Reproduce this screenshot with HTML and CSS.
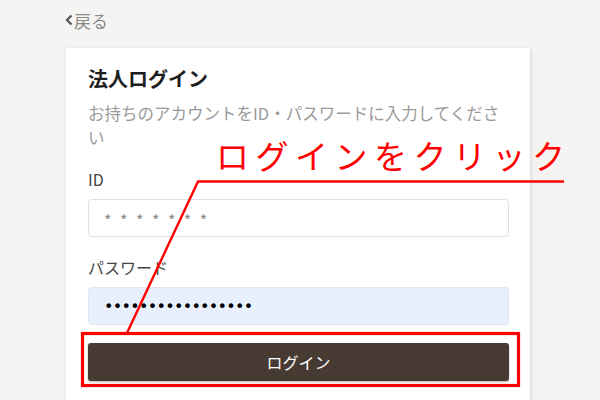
FILE: index.html
```html
<!DOCTYPE html>
<html lang="ja">
<head>
<meta charset="utf-8">
<link rel="stylesheet" href="styles.css">
</head>
<body>
<div class="page">
  <a class="back"><span class="chev"><svg width="8" height="12" viewBox="0 0 8 12"><path d="M6.5 1.5 L2 6 L6.5 10.5" fill="none" stroke="#555" stroke-width="2.2"/></svg></span>戻る</a>
  <div class="card">
    <h1 class="title">法人ログイン</h1>
    <p class="desc">お持ちのアカウントをID・パスワードに入力してください</p>
    <label class="label">ID</label>
    <div class="input"><span class="mask">*******</span></div>
    <label class="label">パスワード</label>
    <div class="input filled"><span class="dots">•••••••••••••••••</span></div>
    <button class="btn">ログイン</button>
  </div>
</div>
<div class="note">ログインをクリック</div>
<svg class="overlay" width="600" height="400" viewBox="0 0 600 400">
  <polyline points="564,181.5 198,181.5 127,333" fill="none" stroke="#f00" stroke-width="2.4"/>
  <rect x="82.5" y="333.5" width="436" height="52" fill="none" stroke="#f00" stroke-width="3.2"/>
</svg>
</body>
</html>
```
FILE: styles.css
```css
html, body {
  margin: 0;
  padding: 0;
  height: 100%;
  overflow: hidden;
}
body {
  background: #f5f4f2;
  font-family: "Noto Sans CJK JP", "Noto Sans", sans-serif;
  position: relative;
}
.page {
  padding: 8px 0 0 65px;
}
.back {
  display: flex;
  align-items: center;
  height: 24px;
  font-size: 17px;
  color: #8a8a8a;
  gap: 1px;
}
.chev {
  display: flex;
  width: 8px;
}
.card {
  margin-top: 16px;
  width: 421px;
  background: #fff;
  box-shadow: 1px 1px 4px rgba(0, 0, 0, 0.12);
  padding: 17px 21px 40px 22px;
  margin-left: 1px;
}
.title {
  margin: 0;
  font-size: 20px;
  line-height: 28px;
  font-weight: bold;
  color: #1e1e1e;
}
.desc {
  margin: 8px 0 0;
  font-size: 16.5px;
  line-height: 24px;
  color: #9a9a9a;
}
.label {
  display: block;
  margin-top: 19px;
  font-size: 16px;
  line-height: 22px;
  color: #444;
}
.input {
  margin-top: 9px;
  height: 36px;
  border: 1px solid #dfe1e5;
  border-radius: 4px;
  display: flex;
  align-items: center;
  padding-left: 15px;
}
.input.filled {
  background: #e8f0fe;
  border-color: #e3e6ec;
}
.mask {
  font-size: 16px;
  color: #888;
  letter-spacing: 8.5px;
  padding-top: 4px;
}
.dots {
  font-family: "DejaVu Sans", sans-serif;
  font-size: 16px;
  color: #000;
  letter-spacing: -0.7px;
}
.btn {
  display: block;
  margin-top: 18px;
  width: 100%;
  height: 38px;
  border: none;
  border-radius: 3px;
  background: #463a32;
  color: #fff;
  font-family: "Noto Sans CJK JP", sans-serif;
  font-size: 16px;
  box-shadow: 0 1px 2px rgba(0, 0, 0, 0.3);
}
.note {
  position: absolute;
  left: 216px;
  top: 138px;
  font-size: 33px;
  line-height: 34px;
  letter-spacing: 6.5px;
  color: #f00;
  white-space: nowrap;
}
.overlay {
  position: absolute;
  left: 0;
  top: 0;
  pointer-events: none;
}
```
